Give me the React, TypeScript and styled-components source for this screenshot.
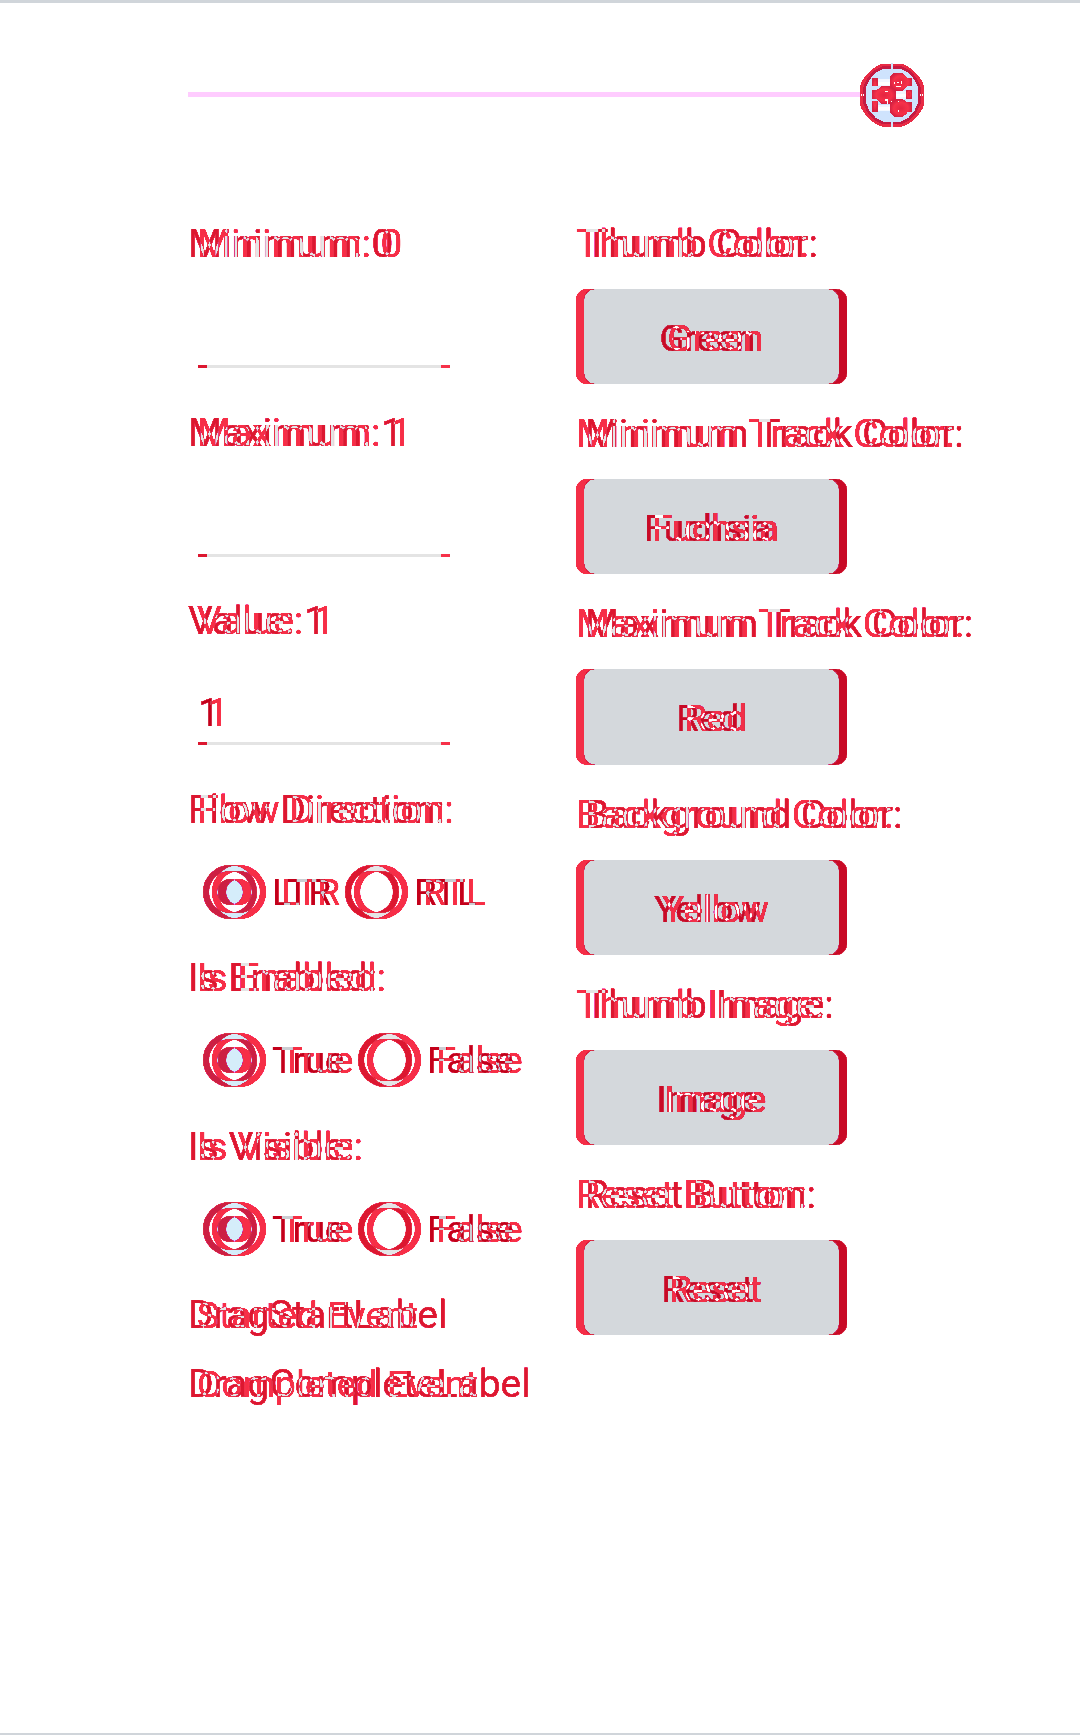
import React from "react";
import styled, { createGlobalStyle } from "styled-components";

const GlobalStyle = createGlobalStyle`
  * { box-sizing: border-box; }
  html, body { margin: 0; padding: 0; background: #fff; }
`;

const BRIGHT = "#f63149";
const DARK = "#dc1730";

const Screen = styled.main`
  width: 1080px;
  height: 1735px;
  overflow: hidden;
  display: flex;
  flex-direction: column;
  background: #fff;
  border-top: 3px solid #d0d5da;
  border-bottom: 2px solid #d0d5da;
  font-family: Roboto, "Liberation Sans", sans-serif;
  font-size: 39px;
  line-height: 45px;
`;

const SliderRow = styled.div`
  display: flex;
  align-items: center;
  height: 64px;
  margin: 60px 0 0 188px;
`;

const Track = styled.div`
  width: 672px;
  height: 5px;
  margin-bottom: 1px;
  background: #ffccff;
`;

const Columns = styled.div`
  display: grid;
  grid-template-columns: 388px auto;
  margin: 94px 0 0 188px;
`;

const Column = styled.div`
  display: flex;
  flex-direction: column;
  align-items: flex-start;
`;

/* Isolated group: two difference layers, tinted by a screen layer on top,
   with the half-covered edge pixels pushed to full red. */
const Blend = styled.div<{ $tint: string }>`
  position: relative;
  isolation: isolate;
  filter: url(#harden);
  display: inline-grid;
  flex: none;
  background: #fff;
  white-space: pre;
  &::after {
    content: "";
    position: absolute;
    inset: 0;
    background: ${(p) => p.$tint};
    mix-blend-mode: screen;
  }
`;

const FilterDefs = styled.svg`
  position: absolute;
  width: 0;
  height: 0;
`;

const Harden = () => (
  <FilterDefs aria-hidden="true">
    <filter id="harden" x="0" y="0" width="100%" height="100%" colorInterpolationFilters="sRGB">
      <feComponentTransfer>
        <feFuncG
          type="table"
          tableValues="0 .05 .1 .15 .19 .19 .19 .19 .19 .19 .19 .19 .19 .19 .19 .19 .8 .85 .9 .95 1"
        />
        <feFuncB
          type="table"
          tableValues="0 .05 .1 .15 .2 .25 .29 .29 .29 .29 .29 .29 .29 .29 .29 .29 .8 .85 .9 .95 1"
        />
      </feComponentTransfer>
    </filter>
  </FilterDefs>
);

const Layer = styled.span<{ $color: string; $shift?: number; $size?: number }>`
  grid-area: 1 / 1;
  color: ${(p) => p.$color};
  margin-left: ${(p) => p.$shift ?? 0}px;
  ${(p) => (p.$size ? `font-size: ${p.$size}px;` : "")}
  mix-blend-mode: difference;
`;

const LabelBox = styled(Blend)<{ $top: number; $flip?: boolean }>`
  align-items: baseline;
  margin-top: ${(p) => p.$top}px;
  height: 45px;
  font-size: ${(p) => (p.$flip ? 38.8 : 39)}px;
  line-height: ${(p) => (p.$flip ? 45 : 47)}px;
`;

type LabelProps = { text: string; second?: string; top?: number; flip?: boolean };

const Label = ({ text, second, top = 0, flip }: LabelProps) => (
  <LabelBox $tint={DARK} $top={top} $flip={flip}>
    <Layer $color="#fff" $shift={flip ? 9 : 0}>{text}</Layer>
    <Layer $color="rgb(66,226,224)" $shift={flip ? 0 : 9} $size={second ? 37.2 : undefined}>
      {second ?? text}
    </Layer>
  </LabelBox>
);

const FieldBox = styled.div`
  display: flex;
  flex-direction: column;
  justify-content: flex-end;
  align-items: flex-start;
  gap: 7px;
  width: 252px;
  height: 102px;
  margin-left: 10px;
`;

const Underline = styled.div`
  display: flex;
  justify-content: space-between;
  width: 252px;
  height: 3px;
  background: #e4e4e4;
`;

const LineEnd = styled.span<{ $color: string }>`
  width: 9px;
  background: ${(p) => p.$color};
`;

const InkBox = styled(Blend)<{ $size: number }>`
  font-size: ${(p) => p.$size}px;
`;

const InkText = ({ text, size }: { text: string; size: number }) => (
  <InkBox $tint="rgb(195,0,26)" $size={size}>
    <Layer $color="#fff">{text}</Layer>
    <Layer $color="rgb(38,206,206)" $shift={9}>{text}</Layer>
  </InkBox>
);

const Field = ({ value }: { value?: string }) => (
  <FieldBox>
    {value && <InkText text={value} size={38.5} />}
    <Underline>
      <LineEnd $color={DARK} />
      <LineEnd $color={BRIGHT} />
    </Underline>
  </FieldBox>
);

const RadioRow = styled.div<{ $top: number }>`
  display: flex;
  height: 54px;
  margin: ${(p) => p.$top}px 0 0 15px;
`;

const Option = styled.div<{ $width: number }>`
  display: flex;
  align-items: center;
  gap: 6px;
  width: ${(p) => p.$width}px;
`;

const Ring = styled.span<{ $color: string; $shift?: number }>`
  grid-area: 1 / 1;
  display: grid;
  place-items: center;
  width: 54px;
  height: 54px;
  margin-left: ${(p) => p.$shift ?? 0}px;
  border: 6px solid ${(p) => p.$color};
  border-radius: 50%;
  mix-blend-mode: difference;
`;

const Dot = styled.span<{ $color: string }>`
  width: 26px;
  height: 26px;
  border-radius: 50%;
  background: ${(p) => p.$color};
`;

const Radio = ({ label, width, checked }: { label: string; width: number; checked?: boolean }) => {
  const second = checked ? "rgb(46,235,248)" : "rgb(66,226,224)";
  return (
    <Option $width={width}>
      <Blend $tint={checked ? "rgb(204,31,68)" : DARK}>
        <Ring $color="#fff">{checked && <Dot $color="#fff" />}</Ring>
        <Ring $color={second} $shift={9}>{checked && <Dot $color={second} />}</Ring>
      </Blend>
      <InkText text={label} size={36.6} />
    </Option>
  );
};

const ButtonBox = styled(Blend)<{ $height: number }>`
  width: 271px;
  height: ${(p) => p.$height}px;
  margin: 23px 0 27px;
  padding: 0;
  border: 0;
  font: inherit;
  font-size: 36.6px;
  line-height: 45px;
  grid-template: 100% / 271px;
  text-align: left;
`;

const Face = styled(Layer)`
  width: 263px;
  height: 100%;
  border-radius: 11px;
  background: ${(p) => p.$color};
`;

const Caption = styled(Layer)`
  width: 263px;
  padding-top: 27px;
  text-align: center;
`;

const GREY = "rgb(55,214,214)";

const ColorButton = ({ text, height = 95 }: { text: string; height?: number }) => (
  <ButtonBox as="button" $tint="rgb(200,10,38)" $height={height}>
    <Face $color="#fff" $shift={8} />
    <Face $color={GREY} />
    <Caption $color={GREY}>{text}</Caption>
    <Caption $color="#fff" $shift={8}>{text}</Caption>
  </ButtonBox>
);

const Thumb = () => (
  <svg width="64" height="64" viewBox="60 40 192 192" shapeRendering="crispEdges">
    <defs>
      <radialGradient id="knob">
        <stop offset="0" stopColor="#e42540" />
        <stop offset="0.65" stopColor="#f63149" />
        <stop offset="1" stopColor="#d62242" />
      </radialGradient>
    </defs>
    <path d="M126 42H186L198 47L214 57L236 79L247 95L252 110V164L247 178L236 195L214 217L198 226L186 231H126L114 226L98 217L76 195L65 178L60 164V110L65 95L76 79L98 57L114 47Z" fill="#e82b45" />
    <path d="M129 53H183L207 65L227 88L238 113V161L227 185L207 208L183 220H129L105 208L85 185L74 161V113L85 88L105 65Z" fill="#cfe3fd" stroke="#c41a42" strokeWidth="8" />
    <path d="M153 40H159V62H153ZM153 213H159V232H153Z" fill="#cfe3fd" />
    <path d="M65 132V140M71 132V140M241 132V140M247 132V140" stroke="#fff" strokeWidth="3" />
    <g fill="url(#knob)">
      <path d="M96 84H114V108H96ZM96 155H114V187H96Z" />
      <path d="M163 69H187L201 82V84H216V110H201V112L187 124H163L150 112V82Z" />
      <path d="M96 121H110L126 109H150L168 123V149L150 163H124L110 149V147H96Z" />
      <path d="M198 121H216V147H198Z" />
      <path d="M163 149H187L202 157H216V187H202V190L187 203H163L150 190V162Z" />
    </g>
    <path d="M114 87H150V108H114ZM168 123H198V149H168ZM114 166H150V185H114Z" fill="#f2f7ff" />
    <path d="M114 96H150V105H114ZM168 132H198V143H168ZM114 172H150V181H114Z" fill="#fff" />
    <path d="M163 96H166V102H163ZM172 98H178V101H172ZM184 93H187V102H184ZM169 108H184V111H169ZM135 123H144V126H135ZM134 149H144V163H140V153H134ZM153 155H156V158H153ZM174 155H177V158H174ZM174 182H177V186H174Z" fill="#fff" />
  </svg>
);

export default function App() {
  return (
    <Screen>
      <GlobalStyle />
      <Harden />
      <SliderRow>
        <Track />
        <Thumb />
      </SliderRow>
      <Columns>
        <Column>
          <Label text="Minimum: 0" />
          <Field />
          <Label text="Maximum: 1" top={42} />
          <Field />
          <Label text="Value: 1" top={41} />
          <Field value="1" />
          <Label text="Flow Direction:" top={42} />
          <RadioRow $top={33}>
            <Radio label="LTR" width={142} checked />
            <Radio label="RTL" width={142} />
          </RadioRow>
          <Label text="Is Enabled:" top={36} />
          <RadioRow $top={33}>
            <Radio label="True" width={155} checked />
            <Radio label="False" width={175} />
          </RadioRow>
          <Label text="Is Visible:" top={37} />
          <RadioRow $top={33}>
            <Radio label="True" width={155} checked />
            <Radio label="False" width={175} />
          </RadioRow>
          <Label text="DragStartLabel" second="Started Event" top={36} />
          <Label text="DragCompleteLabel" second="Completed Event" top={24} />
        </Column>
        <Column>
          <Label text="Thumb Color:" flip />
          <ColorButton text="Green" />
          <Label text="Minimum Track Color:" flip />
          <ColorButton text="Fuchsia" />
          <Label text="Maximum Track Color:" flip />
          <ColorButton text="Red" height={96} />
          <Label text="Background Color:" flip />
          <ColorButton text="Yellow" />
          <Label text="Thumb Image:" flip />
          <ColorButton text="Image" />
          <Label text="Reset Button:" flip />
          <ColorButton text="Reset" />
        </Column>
      </Columns>
    </Screen>
  );
}
